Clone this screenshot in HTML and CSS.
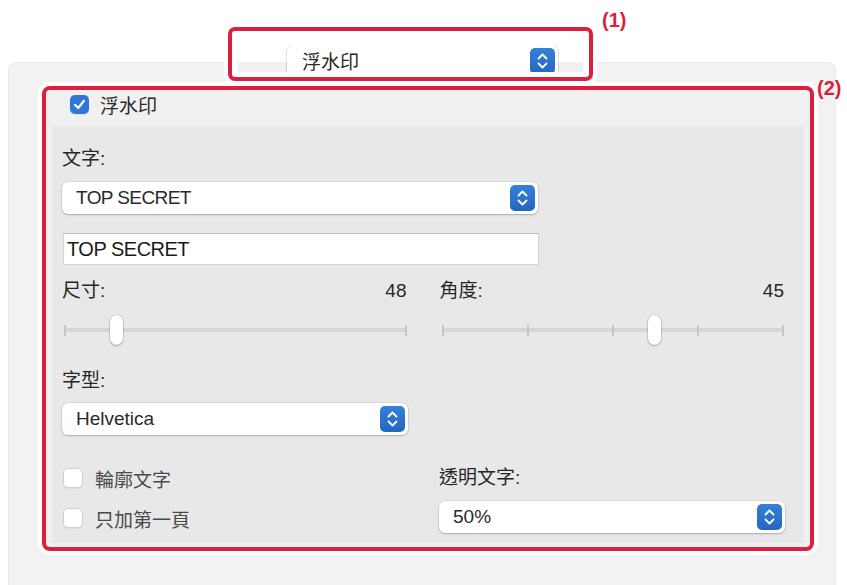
FILE: index.html
```html
<!DOCTYPE html>
<html lang="zh-Hant">
<head>
  <meta charset="UTF-8">
  <title>浮水印</title>
  <link rel="stylesheet" href="styles.css">
</head>
<body>
  <div class="page">
    <!-- callout (1): the popup that picks the pane -->
    <div class="callout callout-1">
      <div class="crop">
        <div class="popup popup-top">
          <span class="popup-text">浮水印</span>
          <span class="stepper">
            <svg width="25" height="26" viewBox="0 0 25 26"><path d="M8.5 10.5 L12.5 6.5 L16.5 10.5 M8.5 15.5 L12.5 19.5 L16.5 15.5" fill="none" stroke="#fff" stroke-width="1.8" stroke-linecap="round" stroke-linejoin="round"/></svg>
          </span>
        </div>
      </div>
    </div>
    <span class="tag tag-1">(1)</span>
    <span class="tag tag-2">(2)</span>

    <div class="panel">
      <div class="focus">
        <div class="focus-head">
          <span class="check checked">
            <svg width="19" height="19" viewBox="0 0 19 19"><path d="M5 9.8 L8.2 13 L14 5.8" fill="none" stroke="#fff" stroke-width="2.2" stroke-linecap="round" stroke-linejoin="round"/></svg>
          </span>
          <span class="head-text">浮水印</span>
        </div>

        <div class="settings">
          <div class="label">文字:</div>
          <div class="popup wide">
            <span class="popup-text tight">TOP SECRET</span>
            <span class="stepper">
              <svg width="25" height="26" viewBox="0 0 25 26"><path d="M8.5 10.5 L12.5 6.5 L16.5 10.5 M8.5 15.5 L12.5 19.5 L16.5 15.5" fill="none" stroke="#fff" stroke-width="1.8" stroke-linecap="round" stroke-linejoin="round"/></svg>
            </span>
          </div>
          <div class="textfield">TOP SECRET</div>

          <div class="split sliders">
            <div class="col">
              <div class="value-row"><span>尺寸:</span><span class="num">48</span></div>
              <div class="slider">
                <div class="track track-size">
                  <span class="tick"></span>
                  <span class="tick"></span>
                </div>
                <span class="thumb" style="left: calc(15.6% - 6px)"></span>
              </div>
            </div>
            <div class="col">
              <div class="value-row"><span>角度:</span><span class="num">45</span></div>
              <div class="slider">
                <div class="track track-angle">
                  <span class="tick"></span>
                  <span class="tick"></span>
                  <span class="tick"></span>
                  <span class="tick"></span>
                  <span class="tick"></span>
                </div>
                <span class="thumb" style="left: calc(62.1% - 6px)"></span>
              </div>
            </div>
          </div>

          <div class="col font-col">
            <div class="label">字型:</div>
            <div class="popup">
              <span class="popup-text">Helvetica</span>
              <span class="stepper">
                <svg width="25" height="26" viewBox="0 0 25 26"><path d="M8.5 10.5 L12.5 6.5 L16.5 10.5 M8.5 15.5 L12.5 19.5 L16.5 15.5" fill="none" stroke="#fff" stroke-width="1.8" stroke-linecap="round" stroke-linejoin="round"/></svg>
              </span>
            </div>
          </div>

          <div class="split bottom">
            <div class="col checks">
              <label class="check-row"><span class="check"></span><span>輪廓文字</span></label>
              <label class="check-row"><span class="check"></span><span>只加第一頁</span></label>
            </div>
            <div class="col">
              <div class="label">透明文字:</div>
              <div class="popup">
                <span class="popup-text">50%</span>
                <span class="stepper">
                  <svg width="25" height="26" viewBox="0 0 25 26"><path d="M8.5 10.5 L12.5 6.5 L16.5 10.5 M8.5 15.5 L12.5 19.5 L16.5 15.5" fill="none" stroke="#fff" stroke-width="1.8" stroke-linecap="round" stroke-linejoin="round"/></svg>
                </span>
              </div>
            </div>
          </div>
        </div>
      </div>
    </div>
  </div>
</body>
</html>
```

FILE: styles.css
```css
* {
  box-sizing: border-box;
}

body {
  margin: 0;
  background: #ffffff;
  font-family: "Liberation Sans", "Noto Sans CJK TC", sans-serif;
  font-size: 19px;
  color: #262626;
  overflow: hidden;
}

.page {
  position: relative;
  height: 585px;
  padding: 62px 11px 0 8px;
}

.panel {
  height: 523px;
  background: #f2f2f2;
  border: 1px solid #ebebeb;
  border-bottom: none;
  border-radius: 8px 8px 0 0;
  padding: 23px 21px 0 33px;
}

/* red callouts */
.callout {
  position: absolute;
  border: 4px solid #db1f3e;
  border-radius: 7px;
  background: #ffffff;
  box-shadow: 0 0 0 4px #ffffff;
}

.callout-1 {
  left: 228px;
  top: 27px;
  width: 365px;
  height: 54px;
  padding: 14px 6px 5px;
}

.crop {
  height: 27px;
  overflow: hidden;
  background: linear-gradient(#ffffff 17px, #f0f0f0 17px);
  padding-left: 49px;
}

.tag {
  position: absolute;
  color: #db1f3e;
  font-weight: 700;
  font-size: 20px;
}

.tag-1 {
  left: 602px;
  top: 9px;
}

.tag-2 {
  left: 817px;
  top: 77px;
}

.focus {
  border: 4px solid #db1f3e;
  border-radius: 8px;
  box-shadow: 0 0 0 4px #ffffff;
  background: #f0f0f0;
  padding: 0 6px 4px;
}

.focus-head {
  height: 36px;
  display: flex;
  align-items: center;
  gap: 11px;
  padding: 0 0 8px 18px;
}

.head-text {
  color: #2a2a2a;
}

/* checkboxes */
.check {
  display: inline-flex;
  width: 20px;
  height: 20px;
  border-radius: 5px;
  background: #ffffff;
  border: 1px solid #cfcfcf;
  box-shadow: 0 1px 1px rgba(0, 0, 0, 0.06);
  flex: none;
}

.check.checked {
  width: 19px;
  height: 19px;
  background: #2e77d6;
  border: none;
}

.settings {
  background: #e8e8e8;
  padding: 22px 19px 10px 10px;
}

.label {
  line-height: 22px;
  height: 22px;
}

/* popup buttons */
.popup {
  display: flex;
  align-items: center;
  justify-content: space-between;
  width: 346px;
  height: 32px;
  background: #ffffff;
  border-radius: 6px;
  box-shadow: 0 0 0 0.5px rgba(0, 0, 0, 0.12), 0 1px 2px rgba(0, 0, 0, 0.22);
  padding: 0 3px 0 14px;
}

.popup.wide {
  width: 476px;
  margin-top: 12px;
}

.popup-top {
  width: 271px;
  height: 31px;
  border-radius: 6px 6px 0 0;
  padding-left: 15px;
}

.popup-text {
  color: #2a2a2a;
}

.tight {
  letter-spacing: -0.6px;
}

.stepper {
  display: inline-flex;
  width: 25px;
  height: 26px;
  border-radius: 5px;
  background: linear-gradient(#3580da, #2466c0);
}

.textfield {
  width: 476px;
  height: 32px;
  margin: 19px 0 0 1px;
  background: #ffffff;
  border: 1px solid #d3d3d3;
  border-top-color: #bdbdbd;
  padding-left: 3px;
  font-size: 20px;
  letter-spacing: -0.5px;
  line-height: 30px;
  color: #1a1a1a;
}

/* two columns */
.split {
  display: flex;
  gap: 32px;
}

.col {
  width: 346px;
}

.sliders {
  margin-top: 15px;
}

.value-row {
  display: flex;
  justify-content: space-between;
  line-height: 22px;
}

.num {
  padding-right: 1px;
}

.slider {
  position: relative;
  height: 43px;
  padding-top: 26px;
}

.track {
  display: flex;
  justify-content: space-between;
  align-items: center;
  height: 4px;
  background: #d6d6d6;
  border-radius: 2px;
}

.track-size {
  margin-left: 2px;
  margin-right: 1px;
}

.track-angle {
  margin-left: 2px;
  margin-right: 1px;
}

.tick {
  width: 2px;
  height: 11px;
  background: #c5c5c5;
}

.thumb {
  position: absolute;
  top: 13px;
  width: 13px;
  height: 30px;
  border-radius: 7px;
  background: #ffffff;
  box-shadow: 0 0 0 0.5px rgba(0, 0, 0, 0.15), 0 1px 2px rgba(0, 0, 0, 0.25);
}

.font-col {
  margin-top: 25px;
}

.font-col .popup {
  margin-top: 11px;
}

.bottom {
  margin-top: 28px;
}

.checks {
  display: flex;
  flex-direction: column;
  gap: 10px;
}

.check-row {
  display: flex;
  align-items: center;
  gap: 12px;
  height: 30px;
  color: #4a4a4a;
  padding-left: 1px;
}

.bottom .label {
  margin-top: 4px;
}

.bottom .popup {
  margin-top: 12px;
}
```
